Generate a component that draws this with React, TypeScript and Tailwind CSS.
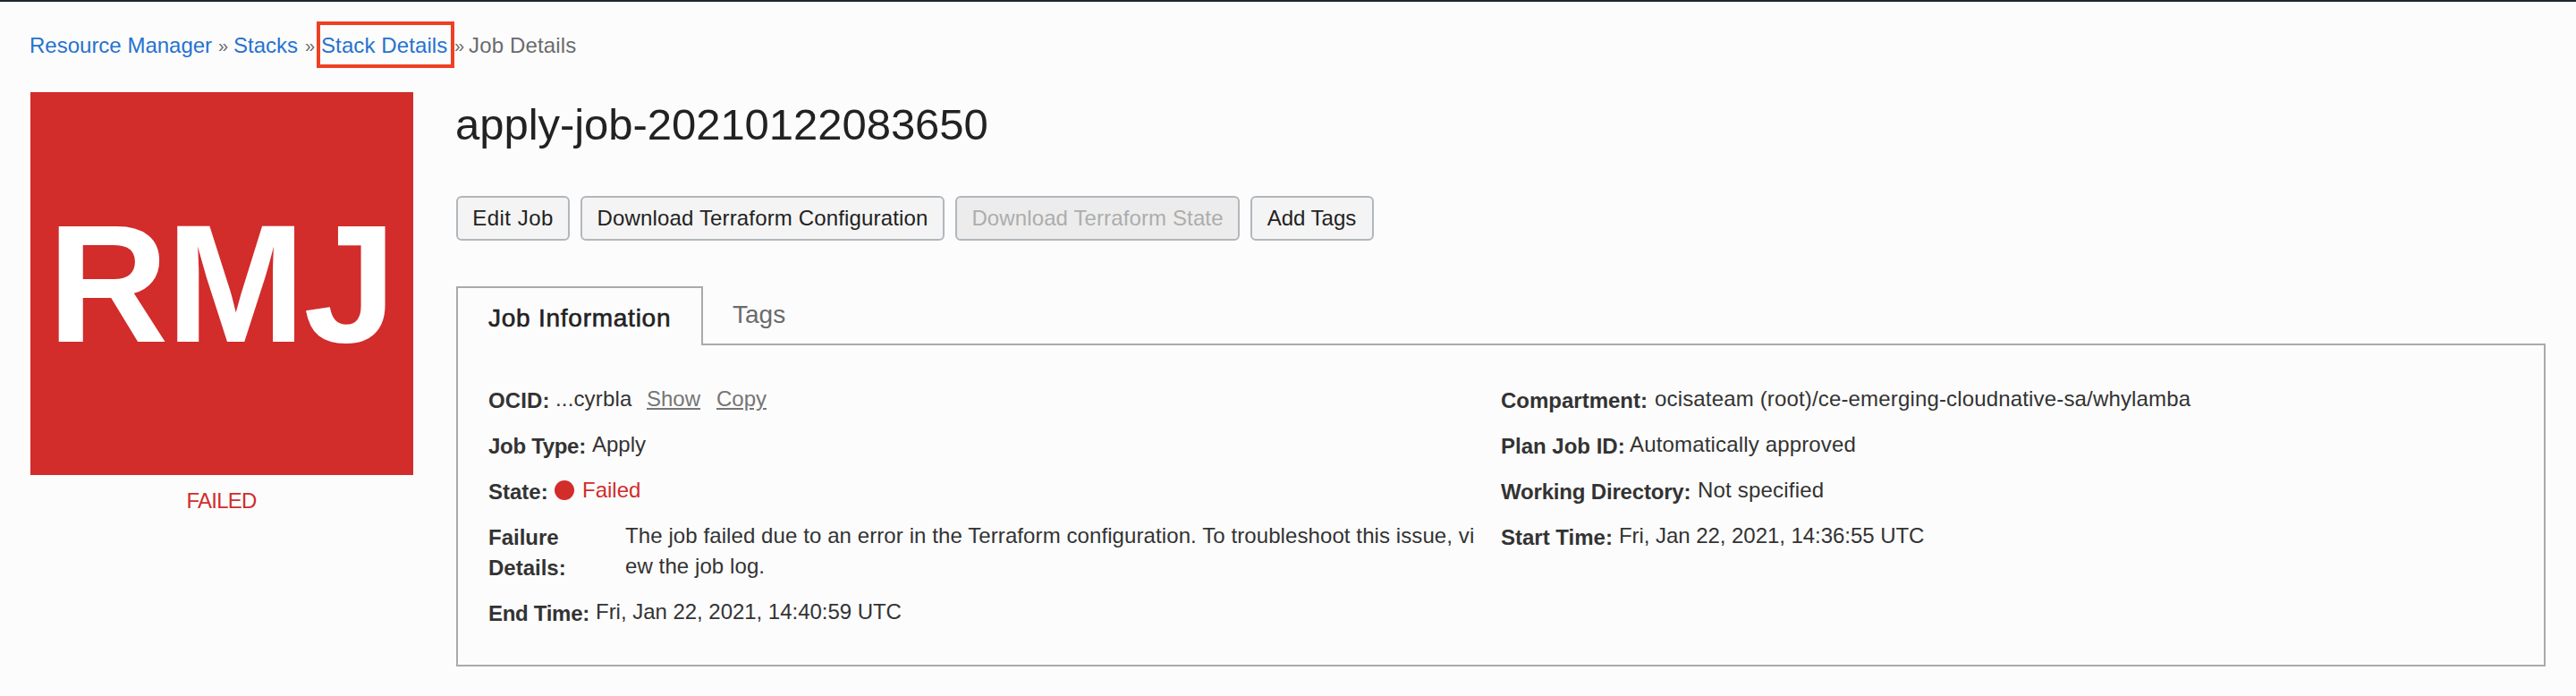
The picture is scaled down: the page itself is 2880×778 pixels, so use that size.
import type { ReactNode } from "react";

const SANS = "font-['Liberation_Sans',Arial,sans-serif]";

function Button({ children, size, disabled }: { children: ReactNode; size: string; disabled?: boolean }) {
  const tone = disabled ? "bg-[#ececec] text-[#adadad]" : "bg-[#f4f4f4] text-[#222222]";
  return (
    <button
      disabled={disabled}
      className={`flex h-[50px] items-center justify-center rounded-[6px] border-2 border-[#b2b7bc] pb-px whitespace-nowrap ${tone} ${size}`}
    >
      {children}
    </button>
  );
}

function Field({ label, labelSize, valueSize = "", children }: { label: string; labelSize: string; valueSize?: string; children: ReactNode }) {
  return (
    <div className="mb-[17px] flex leading-[34px] whitespace-nowrap">
      <dt className={`-mb-0.5 shrink-0 pt-0.5 font-bold ${labelSize}`}>{label}</dt>
      <dd className={valueSize}>{children}</dd>
    </div>
  );
}

export default function App() {
  return (
    <div className={`h-[778px] w-[2880px] overflow-hidden border-t-2 border-[#1f2733] bg-[#fcfcfc] text-[24px] text-[#333333] ${SANS}`}>
      <nav className="flex h-[101px] items-start pt-[22px] pl-[33px] leading-[30px] whitespace-nowrap text-[#6b6b6b]">
        <a className="w-[211px] pt-[12px] text-[#2672cf]">Resource Manager</a>
        <span className="w-[17px] pt-[12px] text-[20px]">»</span>
        <a className="w-[80px] pt-[12px] text-[#2672cf]">Stacks</a>
        <span className="w-[13px] pt-[12px] text-[20px]">»</span>
        <span className="h-[52px] w-[154px] border-4 border-[#ee4023] pt-[8px] pl-px tracking-[0.1px] text-[#2672cf]">Stack Details</span>
        <span className="w-[16px] pt-[12px] text-[20px]">»</span>
        <span className="pt-[12px] tracking-[0.15px]">Job Details</span>
      </nav>

      <div className="flex pl-[34px]">
        <aside className="w-[428px] shrink-0 text-center text-[#d22c2b]">
          <div className="flex size-[428px] items-center justify-center bg-[#d22c2b] pr-[2px] text-[187px] leading-none font-bold tracking-[-2.5px] text-white">
            RMJ
          </div>
          <div className="pt-[12px] pr-px leading-[34px] tracking-[-0.8px]">FAILED</div>
        </aside>

        <main className="ml-[48px] w-[2336px] shrink-0">
          <h1 className="-ml-px h-[116px] pt-[8px] text-[49px] leading-[56px] tracking-[-0.04px] text-[#222222]">apply-job-20210122083650</h1>
          <div className="flex">
            <Button size="w-[127px] mr-[12px] tracking-[0.5px]">Edit Job</Button>
            <Button size="w-[407px] mr-[12px] tracking-[0.15px]">Download Terraform Configuration</Button>
            <Button size="w-[318px] mr-[12px] tracking-[0.12px]" disabled>Download Terraform State</Button>
            <Button size="w-[138px] pr-px">Add Tags</Button>
          </div>

          <div className="mt-[51px] flex text-[28px] leading-[34px] whitespace-nowrap">
            <div className="relative z-10 -mb-0.5 h-[66px] w-[276px] border-2 border-b-0 border-[#aaaaaa] bg-[#fcfcfc] pt-[17px] pl-[34px] tracking-[0.75px] text-[#222222] [-webkit-text-stroke:0.6px_#222222]">
              Job Information
            </div>
            <div className="pt-[15px] pl-[33px] text-[#6b6b6b]">Tags</div>
          </div>

          <section className="flex h-[361px] border-2 border-[#aaaaaa] pt-[43px] pl-[34px]">
            <dl className="w-[1132px]">
              <Field label="OCID:" labelSize="w-[75px] tracking-[0.1px]">
                <span className="inline-block w-[102px] tracking-[0.15px]">...cyrbla</span>
                <a className="inline-block w-[78px] text-[#757575] underline underline-offset-2">Show</a>
                <a className="text-[#757575] underline underline-offset-2">Copy</a>
              </Field>
              <Field label="Job Type:" labelSize="w-[116px] tracking-[-0.3px]">Apply</Field>
              <Field label="State:" labelSize="w-[74px]">
                <span className="flex items-center text-[#d22c2b]">
                  <i className="mr-[9px] size-[22px] rounded-full bg-[#d22c2b]" />
                  Failed
                </span>
              </Field>
              <Field label="Failure Details:" labelSize="w-[153px] pr-[40px] whitespace-normal" valueSize="tracking-[0.09px]">
                The job failed due to an error in the Terraform configuration. To troubleshoot this issue, vi
                <br />
                ew the job log.
              </Field>
              <Field label="End Time:" labelSize="w-[120px] tracking-[-0.3px]" valueSize="tracking-[-0.03px]">Fri, Jan 22, 2021, 14:40:59 UTC</Field>
            </dl>
            <dl>
              <Field label="Compartment:" labelSize="w-[172px]" valueSize="tracking-[0.16px]">ocisateam (root)/ce-emerging-cloudnative-sa/whylamba</Field>
              <Field label="Plan Job ID:" labelSize="w-[144px]" valueSize="tracking-[0.16px]">Automatically approved</Field>
              <Field label="Working Directory:" labelSize="w-[220px] tracking-[-0.18px]" valueSize="tracking-[0.2px]">Not specified</Field>
              <Field label="Start Time:" labelSize="w-[132px]" valueSize="tracking-[-0.05px]">Fri, Jan 22, 2021, 14:36:55 UTC</Field>
            </dl>
          </section>
        </main>
      </div>
    </div>
  );
}
